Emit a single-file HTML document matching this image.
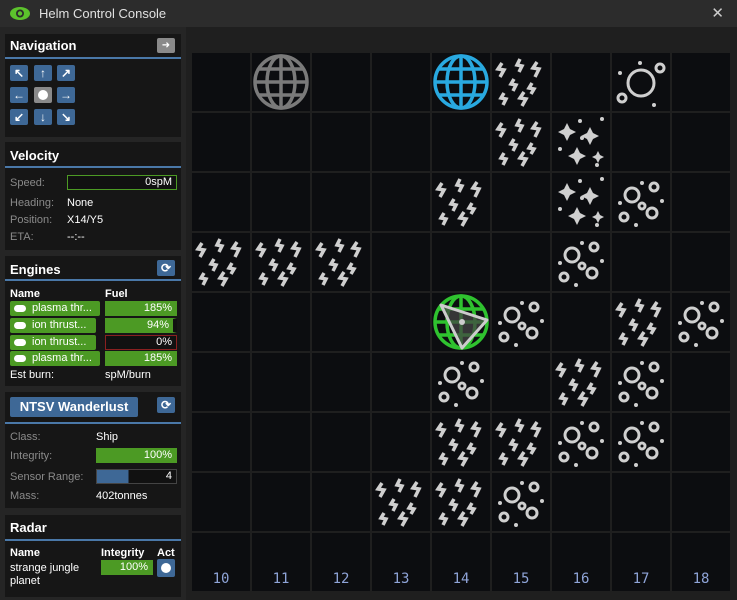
<!DOCTYPE html>
<html><head><meta charset="utf-8">
<style>
*{box-sizing:border-box;margin:0;padding:0}
body{width:737px;height:600px;background:#252525;font-family:"Liberation Sans",sans-serif;font-size:11px;color:#fff;position:relative;overflow:hidden}
.title{position:absolute;left:0;top:0;width:737px;height:27px;background:#2c2c2c;}
.title span{position:absolute;left:39px;top:6px;font-size:13px;color:#e0e0e0}
.title .x{position:absolute;right:13px;top:4px;font-size:15px;color:#ccc}
.panel{position:absolute;left:5px;width:176px;background:#161616}
.hd{position:absolute;left:5px;font-weight:bold;font-size:13px;color:#fff}
.ln{position:absolute;left:0;width:176px;height:2px;background:#4a78a8}
.a{position:absolute;font-size:11px}
.lb{color:#8a8a8a}
.btn{position:absolute;width:18px;height:16px;background:#3e6896;border-radius:2px;color:#fff;font-size:12px;text-align:center;line-height:16px;font-weight:bold}
.bar{position:absolute;height:15px;background:#111;border:1px solid #444;text-align:right;padding-right:4px;line-height:13px;font-size:11px}
.g{background:#4c9a24;border-color:#4c9a24}
.eng{position:absolute;left:5px;height:15px;background:#4c9a24;border-radius:2px;padding-left:22px;line-height:15px;font-size:11px}
.eng:before{content:"";position:absolute;left:4px;top:4px;width:12px;height:7px;border-radius:4px;background:#fff}
.map{position:absolute;left:186px;top:27px;width:551px;height:573px;background:#1f1f1f}
</style></head><body>
<div class="title">
<svg style="position:absolute;left:10px;top:7px" width="20" height="13" viewBox="0 0 20 13"><ellipse cx="10" cy="6.5" rx="10" ry="6.5" fill="#5cc22c"/><circle cx="10" cy="6.5" r="4" fill="#2c2c2c"/><circle cx="10" cy="6.5" r="2.2" fill="#5cc22c"/></svg>
<span>Helm Control Console</span><div class="x">✕</div></div>

<div class="panel" style="top:34px;height:103px">
<div class="hd" style="top:4px">Navigation</div>
<div style="position:absolute;left:152px;top:4px;width:18px;height:15px;background:#8a8a8a;border-radius:2px;color:#fff;font-size:10px;text-align:center;line-height:15px">➜</div>
<div class="ln" style="top:23px"></div>
<div class="btn" style="left:5px;top:31px">↖</div><div class="btn" style="left:29px;top:31px">↑</div><div class="btn" style="left:52px;top:31px">↗</div>
<div class="btn" style="left:5px;top:53px">←</div><div class="btn" style="left:29px;top:53px;background:#8a8a8a"><span style="display:inline-block;width:10px;height:10px;border-radius:50%;background:#fff;margin-top:3px"></span></div><div class="btn" style="left:52px;top:53px">→</div>
<div class="btn" style="left:5px;top:75px">↙</div><div class="btn" style="left:29px;top:75px">↓</div><div class="btn" style="left:52px;top:75px">↘</div>
</div>

<div class="panel" style="top:142px;height:108px">
<div class="hd" style="top:6px">Velocity</div>
<div class="ln" style="top:24px"></div>
<div class="a lb" style="left:5px;top:35px">Speed:</div>
<div class="bar" style="left:62px;top:33px;width:110px;border-color:#4c9a24">0spM</div>
<div class="a lb" style="left:5px;top:55px">Heading:</div><div class="a" style="left:62px;top:55px">None</div>
<div class="a lb" style="left:5px;top:72px">Position:</div><div class="a" style="left:62px;top:72px">X14/Y5</div>
<div class="a lb" style="left:5px;top:89px">ETA:</div><div class="a" style="left:62px;top:89px">--:--</div>
</div>

<div class="panel" style="top:256px;height:130px">
<div class="hd" style="top:6px">Engines</div>
<div class="btn" style="left:152px;top:4px">⟳</div>
<div class="ln" style="top:23px"></div>
<div class="a" style="left:5px;top:32px;font-weight:bold">Name</div><div class="a" style="left:100px;top:32px;font-weight:bold">Fuel</div>
<div class="eng" style="top:45px;width:90px">plasma thr...</div><div class="bar g" style="left:100px;top:45px;width:72px">185%</div>
<div class="eng" style="top:62px;width:86px">ion thrust...</div><div class="bar g" style="left:100px;top:62px;width:72px;border-right:4px solid #111">94%</div>
<div class="eng" style="top:79px;width:86px">ion thrust...</div><div class="bar" style="left:100px;top:79px;width:72px;border-color:#8a2020">0%</div>
<div class="eng" style="top:95px;width:90px">plasma thr...</div><div class="bar g" style="left:100px;top:95px;width:72px">185%</div>
<div class="a" style="left:5px;top:113px">Est burn:</div><div class="a" style="left:100px;top:113px">spM/burn</div>
</div>

<div class="panel" style="top:392px;height:116px">
<div style="position:absolute;left:5px;top:5px;width:128px;height:20px;background:#3e6896;border-radius:2px;font-weight:bold;font-size:13px;line-height:20px;text-align:center">NTSV Wanderlust</div>
<div class="btn" style="left:152px;top:5px">⟳</div>
<div class="ln" style="top:30px"></div>
<div class="a lb" style="left:5px;top:39px">Class:</div><div class="a" style="left:91px;top:39px">Ship</div>
<div class="a lb" style="left:5px;top:58px">Integrity:</div><div class="bar g" style="left:91px;top:56px;width:81px">100%</div>
<div class="a lb" style="left:5px;top:79px">Sensor Range:</div><div class="bar" style="left:91px;top:77px;width:81px;background:linear-gradient(90deg,#3e6896 40%,#111 40%)">4</div>
<div class="a lb" style="left:5px;top:98px">Mass:</div><div class="a" style="left:91px;top:98px">402tonnes</div>
</div>

<div class="panel" style="top:515px;height:82px">
<div class="hd" style="top:5px">Radar</div>
<div class="ln" style="top:24px"></div>
<div class="a" style="left:5px;top:32px;font-weight:bold">Name</div><div class="a" style="left:96px;top:32px;font-weight:bold">Integrity</div><div class="a" style="left:152px;top:32px;font-weight:bold">Act</div>
<div class="a" style="left:5px;top:47px;line-height:13px">strange jungle<br>planet</div>
<div class="bar g" style="left:96px;top:45px;width:52px">100%</div>
<div class="btn" style="left:152px;top:44px;height:18px"><span style="display:inline-block;width:10px;height:10px;border-radius:50%;background:#fff;margin-top:4px"></span></div>
</div>

<div class="map">
<svg width="551" height="573" style="position:absolute;left:0;top:0">
<defs>
<symbol id="L" viewBox="0 0 58 58"><g fill="none" stroke="#cfcfcf" stroke-width="3.5">
<path d="M10 10l-4 6 6 1-4 7"/><path d="M28 6l-3 6 5 1-3 6"/><path d="M45 9l-4 6 6 1-4 8"/><path d="M22 26l-3 5 5 1-3 6"/><path d="M40 30l-3 5 5 1-3 5"/><path d="M12 40l-3 5 5 1-3 6"/><path d="M32 39l-4 6 6 1-4 7"/></g></symbol>
<symbol id="S" viewBox="0 0 58 58"><g fill="#cfcfcf">
<path d="M15 10l3 6 6 3-6 3-3 6-3-6-6-3 6-3z"/><path d="M38 14l3 6 6 3-6 3-3 6-3-6-6-3 6-3z"/><path d="M25 34l3 6 6 3-6 3-3 6-3-6-6-3 6-3z"/><path d="M46 38l2 4 4 2-4 2-2 4-2-4-4-2 4-2z"/>
<circle cx="28" cy="8" r="2"/><circle cx="8" cy="36" r="2"/><circle cx="50" cy="6" r="2"/><circle cx="30" cy="25" r="2"/><circle cx="45" cy="52" r="2"/></g></symbol>
<symbol id="B" viewBox="0 0 58 58"><g fill="none" stroke="#cfcfcf" stroke-width="3">
<circle cx="20" cy="22" r="7"/><circle cx="42" cy="14" r="4"/><circle cx="40" cy="40" r="5"/><circle cx="12" cy="44" r="4"/><circle cx="30" cy="33" r="3"/></g>
<g fill="#cfcfcf"><circle cx="30" cy="10" r="2"/><circle cx="8" cy="30" r="2"/><circle cx="50" cy="28" r="2"/><circle cx="24" cy="52" r="2"/></g></symbol>
<symbol id="O" viewBox="0 0 58 58"><g fill="none" stroke="#cfcfcf" stroke-width="3">
<circle cx="29" cy="30" r="13"/><circle cx="48" cy="15" r="4"/><circle cx="10" cy="45" r="4"/></g>
<g fill="#cfcfcf"><circle cx="28" cy="10" r="2"/><circle cx="8" cy="20" r="2"/><circle cx="42" cy="52" r="2"/></g></symbol>
<symbol id="G" viewBox="0 0 58 58"><g fill="none" stroke-width="3.5">
<circle cx="29" cy="29" r="26"/><ellipse cx="29" cy="29" rx="14" ry="26"/><path d="M29 3v52M3 29h52M6 16h46M6 42h46"/></g></symbol>
</defs>
</svg>
</div>
<script>
var m=document.querySelector('.map svg');var ns='http://www.w3.org/2000/svg';
var t={"0,1":"Ggray","0,4":"Gblue","0,5":"L","0,7":"O","1,5":"L","1,6":"S","2,4":"L","2,6":"S","2,7":"B","3,0":"L","3,1":"L","3,2":"L","3,6":"B","4,4":"Ggreen","4,5":"B","4,7":"L","4,8":"B","5,4":"B","5,6":"L","5,7":"B","6,4":"L","6,5":"L","6,6":"B","6,7":"B","7,3":"L","7,4":"L","7,5":"B"};
var col={gray:"#7a7a7a",blue:"#29a9e0",green:"#2fc22f"};
for(var r=0;r<9;r++)for(var c=0;c<9;c++){
var x=6+60*c,y=26+60*r;
var rc=document.createElementNS(ns,'rect');rc.setAttribute('x',x);rc.setAttribute('y',y);rc.setAttribute('width',58);rc.setAttribute('height',58);rc.setAttribute('fill','#0c0d10');m.appendChild(rc);
var k=t[r+","+c];
if(k){var u=document.createElementNS(ns,'use');u.setAttribute('href','#'+k[0]);u.setAttribute('x',x);u.setAttribute('y',y);u.setAttribute('width',58);u.setAttribute('height',58);if(k[0]=='G')u.setAttribute('stroke',col[k.slice(1)]);m.appendChild(u);}
if(r==8){var tx=document.createElementNS(ns,'text');tx.setAttribute('x',x+29);tx.setAttribute('y',y+50);tx.setAttribute('text-anchor','middle');tx.setAttribute('fill','#8fa4d8');tx.setAttribute('font-size','14');tx.setAttribute('font-family','DejaVu Sans Mono, monospace');tx.textContent=10+c;m.appendChild(tx);}
}
var p=document.createElementNS(ns,'path');p.setAttribute('d','M255 278 L301 293 L276 321 Z');p.setAttribute('fill','#444');p.setAttribute('fill-opacity','0.75');p.setAttribute('stroke','#ccc');p.setAttribute('stroke-width','3');p.setAttribute('stroke-linejoin','round');m.appendChild(p);
var d=document.createElementNS(ns,'circle');d.setAttribute('cx',276);d.setAttribute('cy',295);d.setAttribute('r',3);d.setAttribute('fill','#ccc');m.appendChild(d);
</script>
</body></html>
